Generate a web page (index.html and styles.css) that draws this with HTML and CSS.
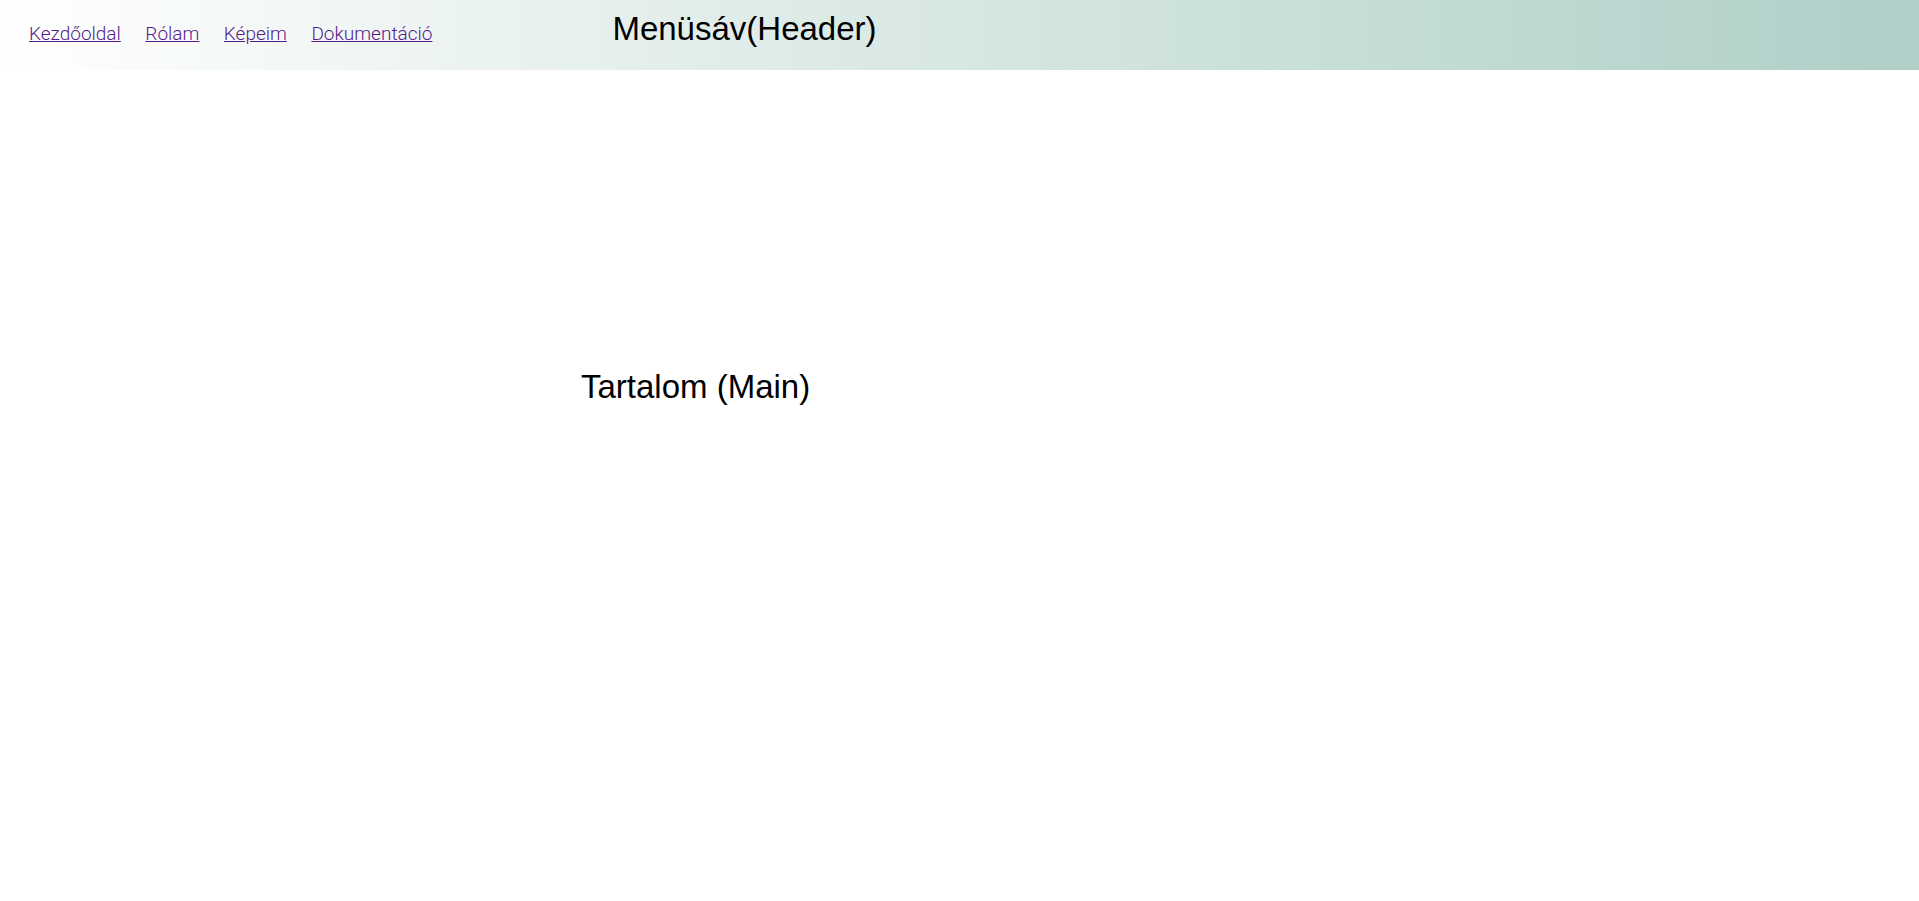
FILE: index.html
```html
<!DOCTYPE html>
<html lang="hu">
<head>
<meta charset="utf-8">
<title>Oldal</title>
<link rel="stylesheet" href="styles.css">
</head>
<body>
<header class="site-header">
  <nav class="nav">
    <a class="nav-link" href="#">Kezdőoldal</a>
    <a class="nav-link" href="#">Rólam</a>
    <a class="nav-link" href="#">Képeim</a>
    <a class="nav-link" href="#">Dokumentáció</a>
  </nav>
  <h1 class="header-title">Menüsáv(Header)</h1>
</header>
<main class="main">
  <h2 class="main-title">Tartalom (Main)</h2>
</main>
</body>
</html>
```

FILE: styles.css
```css
html, body {
  margin: 0;
  padding: 0;
  background: #ffffff;
}

body {
  font-family: "Liberation Sans", Arial, sans-serif;
  color: #000;
}

.site-header {
  height: 70px;
  box-sizing: border-box;
  padding: 10px 0 0 29px;
  display: flex;
  align-items: baseline;
  background: linear-gradient(to right, #ffffff, #afcfc7);
}

.nav {
  display: flex;
  gap: 24.5px;
}

.nav-link {
  font-family: Roboto, "Liberation Sans", sans-serif;
  font-weight: 300;
  font-size: 19px;
  color: #551a8b;
  text-decoration: underline;
}

.header-title {
  margin: 0 0 0 180px;
  font-size: 33px;
  font-weight: 400;
  line-height: normal;
}

.main {
  padding: 298px 0 0 581px;
}

.main-title {
  margin: 0;
  font-size: 33px;
  font-weight: 400;
  line-height: normal;
}
```
